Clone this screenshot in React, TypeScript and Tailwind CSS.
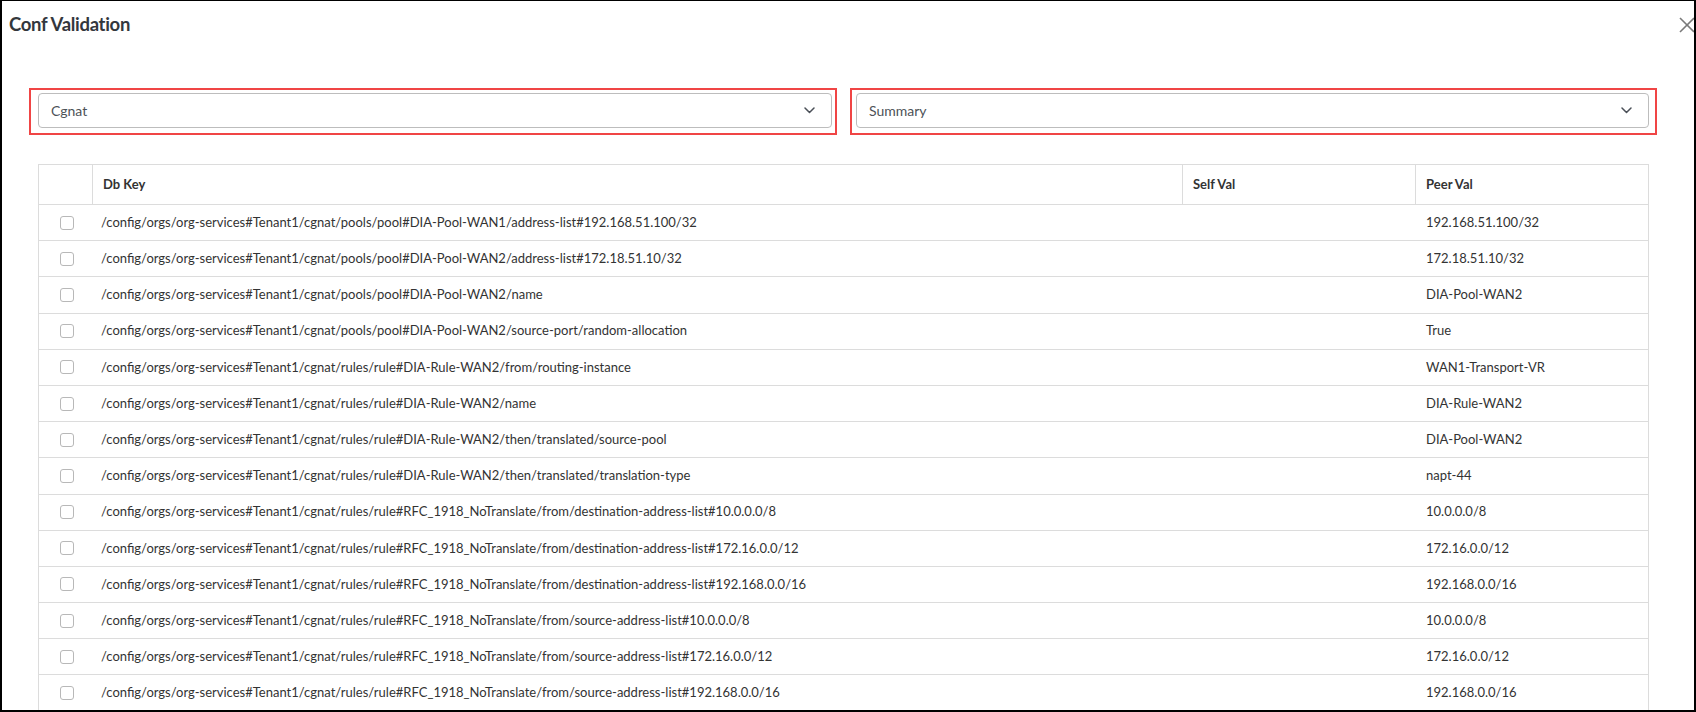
import React from "react";

const P = "/config/orgs/org-services#Tenant1/cgnat/";
const rows: [string, string][] = [
  [P + "pools/pool#DIA-Pool-WAN1/address-list#192.168.51.100/32", "192.168.51.100/32"],
  [P + "pools/pool#DIA-Pool-WAN2/address-list#172.18.51.10/32", "172.18.51.10/32"],
  [P + "pools/pool#DIA-Pool-WAN2/name", "DIA-Pool-WAN2"],
  [P + "pools/pool#DIA-Pool-WAN2/source-port/random-allocation", "True"],
  [P + "rules/rule#DIA-Rule-WAN2/from/routing-instance", "WAN1-Transport-VR"],
  [P + "rules/rule#DIA-Rule-WAN2/name", "DIA-Rule-WAN2"],
  [P + "rules/rule#DIA-Rule-WAN2/then/translated/source-pool", "DIA-Pool-WAN2"],
  [P + "rules/rule#DIA-Rule-WAN2/then/translated/translation-type", "napt-44"],
  [P + "rules/rule#RFC_1918_NoTranslate/from/destination-address-list#10.0.0.0/8", "10.0.0.0/8"],
  [P + "rules/rule#RFC_1918_NoTranslate/from/destination-address-list#172.16.0.0/12", "172.16.0.0/12"],
  [P + "rules/rule#RFC_1918_NoTranslate/from/destination-address-list#192.168.0.0/16", "192.168.0.0/16"],
  [P + "rules/rule#RFC_1918_NoTranslate/from/source-address-list#10.0.0.0/8", "10.0.0.0/8"],
  [P + "rules/rule#RFC_1918_NoTranslate/from/source-address-list#172.16.0.0/12", "172.16.0.0/12"],
  [P + "rules/rule#RFC_1918_NoTranslate/from/source-address-list#192.168.0.0/16", "192.168.0.0/16"],
];

function Chevron() {
  return (
    <svg width="11" height="7" viewBox="0 0 11 7" fill="none">
      <polyline points="1,1 5.5,5.5 10,1" stroke="#4b5058" strokeWidth="1.5" strokeLinecap="round" strokeLinejoin="round" />
    </svg>
  );
}

function Select({ label }: { label: string }) {
  return (
    <div className="h-[35px] border border-[#bdbdbd] rounded-[4px] bg-white flex items-center justify-between pl-[12px] pr-[16px] text-[14px] text-[#4d5257]">
      <span>{label}</span>
      <Chevron />
    </div>
  );
}

function Checkbox() {
  return <div className="w-[14px] h-[14px] border border-[#b8b8b8] rounded-[3px] bg-white" />;
}

export default function App() {
  return (
    <div
      className="w-[1696px] h-[712px] overflow-hidden bg-white border-l-2 border-t border-r-2 border-b-2 border-black relative"
      style={{ fontFamily: "Lato, 'Open Sans', sans-serif" }}
    >
      <div className="h-[87px] pl-[7px] pt-[12px]">
        <h1 className="text-[18.5px] leading-[1.2] font-bold text-[#33373d] tracking-[-0.3px]">Conf Validation</h1>
      </div>
      <svg className="absolute right-[0px] top-[16px]" width="15" height="16" viewBox="0 0 15 16" fill="none">
        <line x1="1" y1="1" x2="15" y2="15" stroke="#7a7a7a" strokeWidth="1.6" />
        <line x1="15" y1="1" x2="1" y2="15" stroke="#7a7a7a" strokeWidth="1.6" />
      </svg>

      <div className="flex gap-[13px] pl-[27px]">
        <div className="w-[808px] h-[47px] border-2 border-[#f04545] pt-[3px] pl-[7px] pr-[3px]">
          <Select label="Cgnat" />
        </div>
        <div className="w-[807px] h-[47px] border-2 border-[#f04545] pt-[3px] pl-[4px] pr-[6px]">
          <Select label="Summary" />
        </div>
      </div>

      <div className="ml-[36px] mt-[29px] w-[1611px] border border-[#dcdcdc] text-[13px] text-[#333]">
        <div className="flex h-[40px] border-b border-[#dcdcdc] font-bold">
          <div className="w-[54px] border-r border-[#dcdcdc]" />
          <div className="w-[1090px] border-r border-[#dcdcdc] flex items-center pl-[10px]">Db Key</div>
          <div className="w-[233px] border-r border-[#dcdcdc] flex items-center pl-[10px]">Self Val</div>
          <div className="flex-1 flex items-center pl-[10px]">Peer Val</div>
        </div>
        {rows.map(([k, v], i) => (
          <div key={i} className="flex h-[36.2px] border-b border-[#dcdcdc] items-center">
            <div className="w-[55px] flex justify-center pl-[1px]">
              <Checkbox />
            </div>
            <div className="w-[1090px] pl-[7px] whitespace-nowrap">{k}</div>
            <div className="w-[233px]" />
            <div className="flex-1 pl-[9px] whitespace-nowrap">{v}</div>
          </div>
        ))}
      </div>
    </div>
  );
}
